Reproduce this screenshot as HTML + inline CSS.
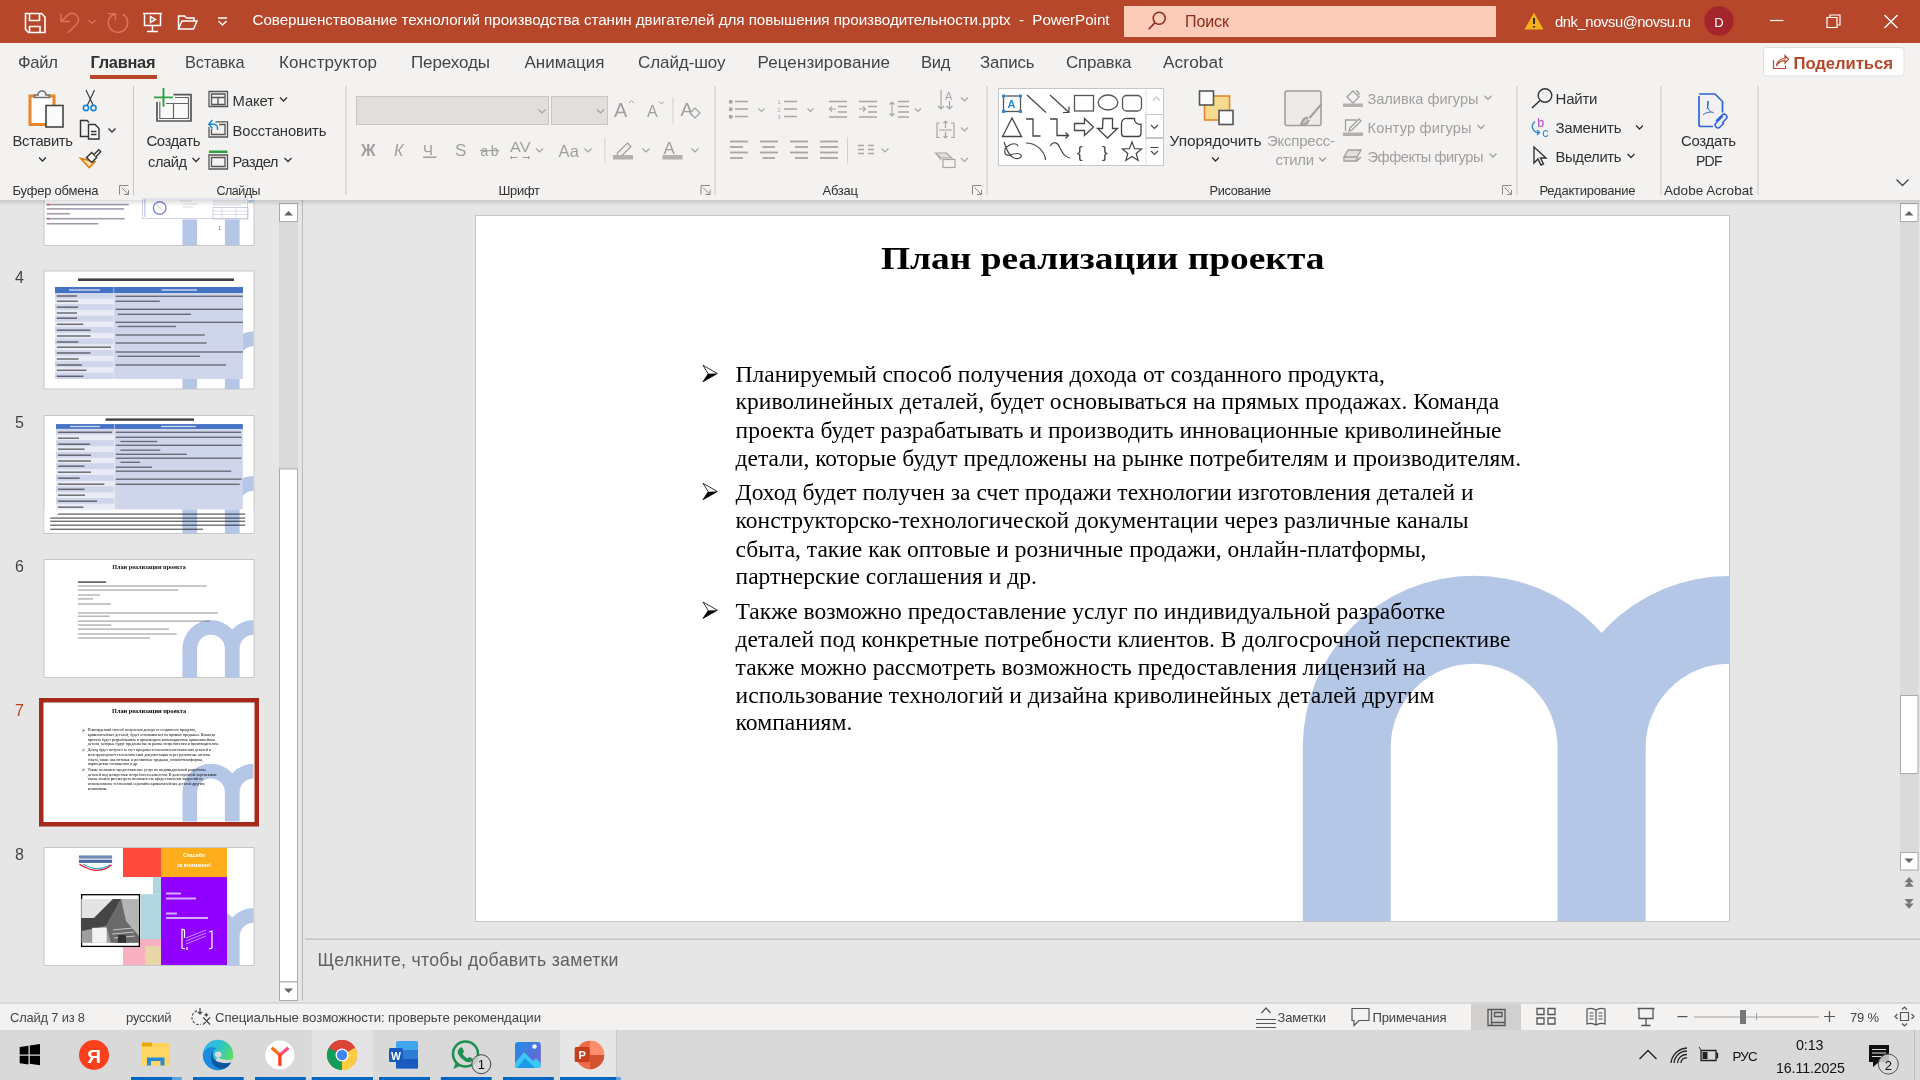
<!DOCTYPE html>
<html><head><meta charset="utf-8"><title>PowerPoint</title>
<style>
html,body{margin:0;padding:0;width:1920px;height:1080px;overflow:hidden;background:#E6E6E6}
svg{display:block;will-change:transform;font-family:"Liberation Sans",sans-serif}
text{white-space:pre}
</style></head><body>
<svg width="1920" height="1080" viewBox="0 0 1920 1080">
<rect x="0" y="43" width="1920" height="157" fill="#F3F2F1"/>
<rect x="0" y="0" width="1920" height="43" fill="#B7472A"/>
<rect x="0" y="200" width="1920" height="803" fill="#E6E6E6"/>
<rect x="0" y="1003" width="1920" height="27" fill="#F3F2F1"/>
<rect x="0" y="1030" width="1920" height="50" fill="#D9D9D9"/>
<path d="M25.5 13.5h16l3.5 3.5v15.5h-16.5l-3-3z M29.5 13.5v7h10v-7 M29.5 32.5v-6h10.5v6" stroke="#FFFFFF" fill="none" stroke-width="1.6"/>
<path d="M61 13.5V21.5H69.8 M61.8 20.8L67.5 15.2A6.3 6.3 0 0 1 76.6 24.3L68 32.8" stroke="#E8705A" fill="none" stroke-width="1.4"/>
<path d="M88.5 20l3.5 3.5l3.5-3.5" stroke="#E8705A" fill="none" stroke-width="1.1"/>
<path d="M107.9 13.6H115.4V20.5 M115.2 13.8L111 15.9A9.7 9.7 0 1 0 122.8 14.2" stroke="#E8705A" fill="none" stroke-width="1.4"/>
<path d="M143 13.5h19 M144.5 13.5v12h16v-12 M152.5 25.5v6 M147 31.5h11 M150.5 16.5v6l5-3z" stroke="#FFFFFF" fill="none" stroke-width="1.5"/>
<path d="M178.5 29v-13h6l2 2h7.5v3 M178.5 29l3.5-8h15l-3.5 8z" stroke="#FFFFFF" fill="none" stroke-width="1.5"/>
<path d="M218 18h9 M218.5 21l4 4l4-4" stroke="#FFFFFF" fill="none" stroke-width="1.4"/>
<text x="252.5" y="25" font-size="15.2" fill="#FFFFFF" textLength="857" lengthAdjust="spacing">Совершенствование технологий производства станин двигателей для повышения производительности.pptx  -  PowerPoint</text>
<rect x="1124" y="6" width="372" height="31" fill="#FCCCB9"/>
<circle cx="1159.2" cy="18.3" r="6" fill="none" stroke="#8B2B1A" stroke-width="1.5"/>
<path d="M1155 22.6l-6.3 6.6" stroke="#8B2B1A" fill="none" stroke-width="1.6"/>
<text x="1185" y="27" font-size="16" fill="#8B2B1A" textLength="44" lengthAdjust="spacing">Поиск</text>
<path d="M1534 12.5l9.5 17h-19z" stroke="none" fill="#F2B01E" stroke-width="1"/>
<path d="M1534 18v6 M1534 26v1.5" stroke="#222" fill="none" stroke-width="1.8"/>
<text x="1555" y="27.3" font-size="14.8" fill="#FFFFFF" textLength="136" lengthAdjust="spacing">dnk_novsu@novsu.ru</text>
<circle cx="1719" cy="21" r="14.7" fill="#A4262C"/>
<text x="1719" y="26.5" font-size="13" fill="#FFFFFF" text-anchor="middle">D</text>
<path d="M1770 20.5h13.5" stroke="#FFFFFF" fill="none" stroke-width="1.2"/>
<path d="M1827 17.5h10v10h-10z M1830 17.5v-2.5h10v10h-2.5" stroke="#FFFFFF" fill="none" stroke-width="1.2"/>
<path d="M1884.5 15l13 13 M1897.5 15l-13 13" stroke="#FFFFFF" fill="none" stroke-width="1.4"/>
<text x="18" y="68" font-size="16.6" fill="#444444" textLength="40" lengthAdjust="spacing">Файл</text>
<text x="90.5" y="68" font-size="16.4" fill="#323130" font-weight="700" textLength="65" lengthAdjust="spacing">Главная</text>
<rect x="90" y="75" width="67" height="4" fill="#B7472A"/>
<text x="185" y="68" font-size="16.4" fill="#444444" textLength="59.5" lengthAdjust="spacing">Вставка</text>
<text x="279" y="68" font-size="17" fill="#444444" textLength="98" lengthAdjust="spacing">Конструктор</text>
<text x="411" y="68" font-size="17" fill="#444444" textLength="79" lengthAdjust="spacing">Переходы</text>
<text x="524.5" y="68" font-size="17" fill="#444444" textLength="80" lengthAdjust="spacing">Анимация</text>
<text x="638" y="68" font-size="17" fill="#444444" textLength="87.5" lengthAdjust="spacing">Слайд-шоу</text>
<text x="757.5" y="68" font-size="17" fill="#444444" textLength="132.5" lengthAdjust="spacing">Рецензирование</text>
<text x="921" y="68" font-size="16.6" fill="#444444" textLength="29.5" lengthAdjust="spacing">Вид</text>
<text x="980" y="68" font-size="16.8" fill="#444444" textLength="54.5" lengthAdjust="spacing">Запись</text>
<text x="1066" y="68" font-size="17" fill="#444444" textLength="65.5" lengthAdjust="spacing">Справка</text>
<text x="1163" y="68" font-size="17.2" fill="#444444" textLength="60" lengthAdjust="spacing">Acrobat</text>
<rect x="1763.5" y="47.5" width="140.5" height="28.5" fill="#FFFFFF" stroke="#E1DFDD" rx="3"/>
<path d="M1773.5 60v8.5h12v-3 M1776.5 66c0.5-4 3.5-7.5 8.5-7.5v-3l3.5 3.8l-3.5 3.8v-2.8c-3.5 0-6.5 2-8.5 5.7z" stroke="#B7472A" fill="none" stroke-width="1.2"/>
<text x="1793.5" y="68.5" font-size="16.7" fill="#B7472A" font-weight="700" textLength="99.5" lengthAdjust="spacing">Поделиться</text>
<rect x="133" y="86" width="1" height="109" fill="#C8C6C4"/>
<rect x="345.5" y="86" width="1" height="109" fill="#C8C6C4"/>
<rect x="714.5" y="86" width="1" height="109" fill="#C8C6C4"/>
<rect x="986.5" y="86" width="1" height="109" fill="#C8C6C4"/>
<rect x="1516.5" y="86" width="1" height="109" fill="#C8C6C4"/>
<rect x="1660.5" y="86" width="1" height="109" fill="#C8C6C4"/>
<rect x="1757.5" y="86" width="1" height="109" fill="#C8C6C4"/>
<text x="12.5" y="195" font-size="13.0" fill="#323130" textLength="86" lengthAdjust="spacing">Буфер обмена</text>
<text x="216.5" y="195" font-size="12.5" fill="#323130" textLength="44" lengthAdjust="spacing">Слайды</text>
<text x="498.5" y="195" font-size="13.0" fill="#323130" textLength="41.5" lengthAdjust="spacing">Шрифт</text>
<text x="822.5" y="195" font-size="13.0" fill="#323130" textLength="35.5" lengthAdjust="spacing">Абзац</text>
<text x="1209.5" y="195" font-size="12.7" fill="#323130" textLength="61.5" lengthAdjust="spacing">Рисование</text>
<text x="1539.5" y="195" font-size="13.0" fill="#323130" textLength="96" lengthAdjust="spacing">Редактирование</text>
<text x="1664" y="195" font-size="13.5" fill="#323130" textLength="89" lengthAdjust="spacing">Adobe Acrobat</text>
<path d="M119.5 194.5v-9h9 M121.5 187.5l7 7 M124 194.5h4.5v-4.5" stroke="#8A8886" fill="none" stroke-width="1"/>
<path d="M701.0 194.5v-9h9 M703.0 187.5l7 7 M705.5 194.5h4.5v-4.5" stroke="#8A8886" fill="none" stroke-width="1"/>
<path d="M972.5 194.5v-9h9 M974.5 187.5l7 7 M977 194.5h4.5v-4.5" stroke="#8A8886" fill="none" stroke-width="1"/>
<path d="M1502.5 194.5v-9h9 M1504.5 187.5l7 7 M1507 194.5h4.5v-4.5" stroke="#8A8886" fill="none" stroke-width="1"/>
<text x="12.5" y="146" font-size="14.8" fill="#323130" textLength="60.5" lengthAdjust="spacing">Вставить</text>
<path d="M39 157.5l3.5 3.5l3.5-3.5" stroke="#323130" fill="none" stroke-width="1.3"/>
<rect x="30" y="96" width="24" height="28.5" fill="#FFFFFF" stroke="#E8862A" stroke-width="3"/>
<path d="M34.5 97.5h15v-2.5h-3.5a4 4 0 0 0 -8 0h-3.5z" stroke="#707070" fill="#F5F5F5" stroke-width="1.6"/>
<rect x="46" y="105.5" width="17" height="21.5" fill="#FAFAFA" stroke="#444" stroke-width="1.6"/>
<path d="M86 90l7.5 16 M94.5 90l-7.5 16" stroke="#333" fill="none" stroke-width="1.1"/>
<circle cx="86" cy="108" r="2.6" fill="none" stroke="#1E88D4" stroke-width="1.6"/><circle cx="93.5" cy="108" r="2.6" fill="none" stroke="#1E88D4" stroke-width="1.6"/>
<path d="M89 136.5h-8.5v-16h6.5l2 2" stroke="#333" fill="none" stroke-width="1.4"/>
<path d="M88.5 124.5h6.5l4 4v10.5h-10.5z M91 131.5h5.5 M91 134.5h5.5" stroke="#333" fill="#FAFAFA" stroke-width="1.4"/>
<path d="M108.5 128.5l3.5 3.5l3.5-3.5" stroke="#323130" fill="none" stroke-width="1.3"/>
<path d="M80.6 158.4L89.2 167.6L95 161.8z" stroke="#E07C13" fill="#FCE4A8" stroke-width="1.6"/>
<path d="M86.5 157.5L91.7 152.6L96.6 157.5L91.8 162.4z" stroke="#333" fill="#FAFAFA" stroke-width="1.4"/>
<path d="M94 154.5L98.8 149.7L100.8 151.7L96 156.5" stroke="#333" fill="#FAFAFA" stroke-width="1.4"/>
<text x="146.5" y="146" font-size="14.9" fill="#323130" textLength="54" lengthAdjust="spacing">Создать</text>
<text x="148" y="166.5" font-size="14.6" fill="#323130" textLength="39" lengthAdjust="spacing">слайд</text>
<path d="M192.5 158l3.5 3.5l3.5-3.5" stroke="#323130" fill="none" stroke-width="1.3"/>
<rect x="157.5" y="95" width="33.5" height="26" fill="#FAFAFA"/>
<path d="M157 100V121H191V94.7H173.5" stroke="#555" fill="none" stroke-width="1.7"/>
<path d="M159.8 100V118.5H188.5V97.5H175 M166 103.5H188.5 M173.5 103.5V118.5" stroke="#666" fill="none" stroke-width="1.2"/>
<rect x="154" y="93" width="12" height="9" fill="#F3F2F1"/>
<path d="M163.5 88V106.8 M154 97.4H173" stroke="#2EA043" fill="none" stroke-width="1.9"/>
<text x="232.5" y="106" font-size="14.8" fill="#323130" textLength="41.5" lengthAdjust="spacing">Макет</text>
<text x="232.5" y="136" font-size="14.8" fill="#323130" textLength="94" lengthAdjust="spacing">Восстановить</text>
<text x="232.5" y="166.5" font-size="14.8" fill="#323130" textLength="46" lengthAdjust="spacing">Раздел</text>
<path d="M280 97.5l3.5 3.5l3.5-3.5" stroke="#323130" fill="none" stroke-width="1.3"/>
<path d="M284.5 158l3.5 3.5l3.5-3.5" stroke="#323130" fill="none" stroke-width="1.3"/>
<path d="M209 91.5h18.5v15h-18.5z M211.5 94h13.5v10.5h-13.5z M211.5 97.5h13.5 M218 97.5v7" stroke="#555" fill="none" stroke-width="1.3"/>
<path d="M209 127V137H227.5V121.8H215.5 M211.5 129V134.5H225V124.5H219" stroke="#555" fill="none" stroke-width="1.3"/>
<path d="M212.5 120L208.8 124.2L212.5 128.4 M209 124.2H213.5A4 4 0 0 1 217.5 128.2V130" stroke="#1E88D4" fill="none" stroke-width="1.5"/>
<rect x="209" y="150.5" width="18.5" height="2.5" fill="#2EA043"/>
<path d="M209 155h18.5v14h-18.5z M211.5 157.5h13.5v9h-13.5z" stroke="#555" fill="none" stroke-width="1.3"/>
<rect x="356.5" y="96.5" width="192" height="28" fill="#E1DFDD" stroke="#C8C6C4"/>
<rect x="551.5" y="96.5" width="56" height="28" fill="#E1DFDD" stroke="#C8C6C4"/>
<path d="M538.5 109.5l3.5 3.5l3.5-3.5" stroke="#A19F9D" fill="none" stroke-width="1.1"/>
<path d="M597 109.5l3.5 3.5l3.5-3.5" stroke="#A19F9D" fill="none" stroke-width="1.1"/>
<text x="614" y="116.5" font-size="20" fill="#A19F9D">A</text>
<path d="M629 103l2.5-2.5l2.5 2.5" stroke="#A19F9D" fill="none" stroke-width="1"/>
<text x="647" y="116.5" font-size="16" fill="#A19F9D">A</text>
<path d="M659 101.5l2.5 2.5l2.5-2.5" stroke="#A19F9D" fill="none" stroke-width="1"/>
<rect x="672.5" y="97.5" width="1" height="26" fill="#D2D0CE"/>
<text x="680.5" y="116" font-size="19" fill="#A19F9D">A</text>
<path d="M690 113l5-5l5 5l-5 5z" stroke="#A19F9D" fill="#F3F2F1" stroke-width="1.2"/>
<text x="361" y="155.5" font-size="16" fill="#A19F9D" font-weight="700" textLength="18" lengthAdjust="spacing">Ж</text>
<text x="394" y="155.5" font-size="16" fill="#A19F9D" font-style="italic">К</text>
<text x="423" y="155" font-size="15" fill="#A19F9D">Ч</text>
<rect x="423" y="156.5" width="13.5" height="1.5" fill="#A19F9D"/>
<text x="455" y="155.5" font-size="17" fill="#A19F9D">S</text>
<text x="480.5" y="156" font-size="14" fill="#A19F9D" textLength="18" lengthAdjust="spacing">ab</text>
<rect x="480" y="150" width="19.5" height="1.2" fill="#A19F9D"/>
<text x="510" y="152" font-size="15" fill="#A19F9D" textLength="20.5" lengthAdjust="spacingAndGlyphs">AV</text>
<path d="M512 156l-1.5 1.5l1.5 1.5 M510.5 157.5h7 M528 156l1.5 1.5l-1.5 1.5 M529.5 157.5h-7" stroke="#A19F9D" fill="none" stroke-width="1"/>
<path d="M536 148.5l3.5 3.5l3.5-3.5" stroke="#A19F9D" fill="none" stroke-width="1.1"/>
<text x="558.5" y="156.5" font-size="16.5" fill="#A19F9D" textLength="20.5" lengthAdjust="spacing">Aa</text>
<path d="M584.5 148.5l3.5 3.5l3.5-3.5" stroke="#A19F9D" fill="none" stroke-width="1.1"/>
<rect x="604.5" y="137.5" width="1" height="25.5" fill="#D2D0CE"/>
<path d="M617.5 153l10-10l3.5 3.5l-10 10l-4.5 1z" stroke="#A19F9D" fill="none" stroke-width="1.2"/>
<rect x="613" y="155" width="20" height="4.5" fill="#B3B0AD"/>
<path d="M642.5 148.5l3.5 3.5l3.5-3.5" stroke="#A19F9D" fill="none" stroke-width="1.1"/>
<text x="663.5" y="154" font-size="17" fill="#A19F9D">A</text>
<rect x="662.5" y="155" width="20" height="4.5" fill="#B3B0AD"/>
<path d="M691.5 148.5l3.5 3.5l3.5-3.5" stroke="#A19F9D" fill="none" stroke-width="1.1"/>
<rect x="729" y="100.0" width="3.5" height="3.5" fill="#A8A6A4"/>
<rect x="729" y="107.5" width="3.5" height="3.5" fill="#A8A6A4"/>
<rect x="729" y="115.0" width="3.5" height="3.5" fill="#A8A6A4"/>
<rect x="735" y="100.75" width="13" height="1.5" fill="#A8A6A4"/>
<rect x="735" y="108.25" width="13" height="1.5" fill="#A8A6A4"/>
<rect x="735" y="115.75" width="13" height="1.5" fill="#A8A6A4"/>
<path d="M758.5 108.5l3 3l3-3" stroke="#A8A6A4" fill="none" stroke-width="1.1"/>
<text x="777.5" y="104" font-size="5.5" fill="#A8A6A4">1</text>
<text x="777.5" y="111.5" font-size="5.5" fill="#A8A6A4">2</text>
<text x="777.5" y="119" font-size="5.5" fill="#A8A6A4">3</text>
<rect x="784" y="100.75" width="13" height="1.5" fill="#A8A6A4"/>
<rect x="784" y="108.25" width="13" height="1.5" fill="#A8A6A4"/>
<rect x="784" y="115.75" width="13" height="1.5" fill="#A8A6A4"/>
<path d="M807.5 108.5l3 3l3-3" stroke="#A8A6A4" fill="none" stroke-width="1.1"/>
<rect x="829" y="100.75" width="18" height="1.5" fill="#A8A6A4"/>
<rect x="829" y="116.25" width="18" height="1.5" fill="#A8A6A4"/>
<rect x="838" y="105.75" width="9" height="1.5" fill="#A8A6A4"/>
<rect x="838" y="111.25" width="9" height="1.5" fill="#A8A6A4"/>
<path d="M836 109h-6.5 M832 106.5l-2.5 2.5l2.5 2.5" stroke="#A8A6A4" fill="none" stroke-width="1.1"/>
<rect x="859" y="100.75" width="18" height="1.5" fill="#A8A6A4"/>
<rect x="859" y="116.25" width="18" height="1.5" fill="#A8A6A4"/>
<rect x="868" y="105.75" width="9" height="1.5" fill="#A8A6A4"/>
<rect x="868" y="111.25" width="9" height="1.5" fill="#A8A6A4"/>
<path d="M859 109h6.5 M863 106.5l2.5 2.5l-2.5 2.5" stroke="#A8A6A4" fill="none" stroke-width="1.1"/>
<rect x="898" y="100.75" width="11" height="1.5" fill="#A8A6A4"/>
<rect x="898" y="105.75" width="11" height="1.5" fill="#A8A6A4"/>
<rect x="898" y="111.25" width="11" height="1.5" fill="#A8A6A4"/>
<rect x="898" y="116.25" width="11" height="1.5" fill="#A8A6A4"/>
<path d="M892 102v14 M889.5 104.5l2.5-2.5l2.5 2.5 M889.5 113.5l2.5 2.5l2.5-2.5" stroke="#A8A6A4" fill="none" stroke-width="1.1"/>
<path d="M915 108.5l3 3l3-3" stroke="#A8A6A4" fill="none" stroke-width="1.1"/>
<rect x="730" y="140.6" width="18" height="1.8" fill="#A8A6A4"/>
<rect x="730" y="151.6" width="18" height="1.8" fill="#A8A6A4"/>
<rect x="730" y="146.1" width="13" height="1.8" fill="#A8A6A4"/>
<rect x="730" y="157.1" width="13" height="1.8" fill="#A8A6A4"/>
<rect x="760" y="140.6" width="18" height="1.8" fill="#A8A6A4"/>
<rect x="760" y="151.6" width="18" height="1.8" fill="#A8A6A4"/>
<rect x="762.5" y="146.1" width="12.5" height="1.8" fill="#A8A6A4"/>
<rect x="762.5" y="157.1" width="12.5" height="1.8" fill="#A8A6A4"/>
<rect x="790" y="140.6" width="18" height="1.8" fill="#A8A6A4"/>
<rect x="790" y="151.6" width="18" height="1.8" fill="#A8A6A4"/>
<rect x="795" y="146.1" width="13" height="1.8" fill="#A8A6A4"/>
<rect x="795" y="157.1" width="13" height="1.8" fill="#A8A6A4"/>
<rect x="820" y="140.6" width="18" height="1.8" fill="#A8A6A4"/>
<rect x="820" y="146.1" width="18" height="1.8" fill="#A8A6A4"/>
<rect x="820" y="151.6" width="18" height="1.8" fill="#A8A6A4"/>
<rect x="820" y="157.1" width="18" height="1.8" fill="#A8A6A4"/>
<rect x="847" y="137" width="1" height="26.5" fill="#D2D0CE"/>
<rect x="858" y="144.75" width="6" height="1.5" fill="#A8A6A4"/>
<rect x="858" y="148.75" width="6" height="1.5" fill="#A8A6A4"/>
<rect x="858" y="152.75" width="6" height="1.5" fill="#A8A6A4"/>
<rect x="868" y="144.75" width="6" height="1.5" fill="#A8A6A4"/>
<rect x="868" y="148.75" width="6" height="1.5" fill="#A8A6A4"/>
<rect x="868" y="152.75" width="6" height="1.5" fill="#A8A6A4"/>
<path d="M881.5 148.5l3.5 3.5l3.5-3.5" stroke="#A8A6A4" fill="none" stroke-width="1.1"/>
<text x="945" y="100" font-size="11" fill="#A8A6A4">A</text>
<path d="M941 90v19 M938 106l3 3l3-3 M949.5 101v8.5 M946.5 106l3 3l3-3" stroke="#A8A6A4" fill="none" stroke-width="1.2"/>
<path d="M961 97.5l3.5 3.5l3.5-3.5" stroke="#A8A6A4" fill="none" stroke-width="1.1"/>
<path d="M940 123h-3v14.5h3 M951 123h3v14.5h-3 M939 130h13 M945.5 121v7 M943.5 123l2-2l2 2 M945.5 132v6 M943.5 136l2 2l2-2" stroke="#A8A6A4" fill="none" stroke-width="1.2"/>
<path d="M961 127.5l3.5 3.5l3.5-3.5" stroke="#A8A6A4" fill="none" stroke-width="1.1"/>
<path d="M935.5 153h11l5.5 5h-11z M935.5 153l5.5 7" stroke="#A8A6A4" fill="#E1DFDD" stroke-width="1.1"/>
<rect x="943" y="159.5" width="12" height="8" fill="#F3F2F1" stroke="#A8A6A4" stroke-width="1.2"/>
<path d="M961 158l3.5 3.5l3.5-3.5" stroke="#A8A6A4" fill="none" stroke-width="1.1"/>
<rect x="998.5" y="88.5" width="165" height="77" fill="#FFFFFF" stroke="#C8C6C4"/>
<rect x="1145.5" y="88.5" width="1" height="77" fill="#E1DFDD"/>
<rect x="1146" y="114.5" width="17.5" height="23" fill="#FFFFFF" stroke="#C8C6C4"/>
<rect x="1145.5" y="138" width="18" height="1" fill="#C8C6C4"/>
<path d="M1161 100.5l3.5-3.5l3.5 3.5" stroke="#C8C6C4" fill="none" stroke-width="1.1" transform="translate(-8,0)"/>
<path d="M1151 125l3.5 3.5l3.5-3.5" stroke="#444" fill="none" stroke-width="1.2"/>
<path d="M1150.5 147.5h8 M1151 151l3.5 3.5l3.5-3.5" stroke="#444" fill="none" stroke-width="1.2"/>
<rect x="1003.5" y="96" width="17" height="15.5" fill="none" stroke="#555" stroke-width="1.3"/>
<rect x="1002.0" y="94.5" width="3" height="3" fill="#2B88D8"/>
<rect x="1019.0" y="94.5" width="3" height="3" fill="#2B88D8"/>
<rect x="1002.0" y="110.0" width="3" height="3" fill="#2B88D8"/>
<rect x="1019.0" y="110.0" width="3" height="3" fill="#2B88D8"/>
<text x="1007.5" y="108" font-size="11" fill="#2B88D8" font-weight="700">A</text>
<path d="M1027 95l19 17.5" stroke="#444" fill="none" stroke-width="1.2"/>
<path d="M1050 95l19 17.5 M1063 112.5h6v-6" stroke="#444" fill="none" stroke-width="1.2"/>
<rect x="1074.5" y="95.5" width="19" height="15.5" fill="none" stroke="#555" stroke-width="1.3"/>
<ellipse cx="1108" cy="102.5" rx="9.8" ry="7.5" fill="none" stroke="#555" stroke-width="1.3"/>
<rect x="1122.5" y="95.5" width="19" height="15.5" fill="none" stroke="#555" stroke-width="1.3" rx="4"/>
<path d="M1012 118l-9.5 18.5h19z" stroke="#444" fill="none" stroke-width="1.3"/>
<path d="M1026 119h7v17h7.5" stroke="#444" fill="none" stroke-width="1.3"/>
<path d="M1050 119h7v16.5h11.5 M1065.5 132.5l3 3l-3 3" stroke="#444" fill="none" stroke-width="1.3"/>
<path d="M1074.5 123.5h10v-5l9 8.5l-9 8.5v-5h-10z" stroke="#444" fill="none" stroke-width="1.3"/>
<path d="M1103 118.5h9.5v10h5l-10 9.5l-10-9.5h5z" stroke="#444" fill="none" stroke-width="1.3"/>
<path d="M1127.5 118.5h7a5 5 0 0 0 6.5 5.5v9.5a3 3 0 0 1 -3 3h-13.5a3 3 0 0 1 -3-3v-10a5 5 0 0 1 6-5z" stroke="#444" fill="none" stroke-width="1.3"/>
<path d="M1004 142c2 4 3 13 10 16c5 2 8-1 7-3c-2-3-8-1-11 0c-6 2-7-6-2-9c4-3 9-3 10 0" stroke="#444" fill="none" stroke-width="1.2"/>
<path d="M1026 143c10 0 19 8 19.5 17" stroke="#444" fill="none" stroke-width="1.2"/>
<path d="M1050 146c4-6 8-3 10 2c3 6 5 9 10 10" stroke="#444" fill="none" stroke-width="1.2"/>
<text x="1077" y="158" font-size="17" fill="#444">{</text>
<text x="1102" y="158" font-size="17" fill="#444">}</text>
<path d="M1132 142l2.6 6.7l7 .3l-5.4 4.5l1.9 6.9l-6.1-4l-6.1 4l1.9-6.9l-5.4-4.5l7-.3z" stroke="#444" fill="none" stroke-width="1.2"/>
<rect x="1204.5" y="96" width="25" height="24" fill="#F8DA8E" stroke="#E8862A" stroke-width="1.6"/>
<rect x="1199.5" y="91" width="14" height="14" fill="#FAFAFA" stroke="#555" stroke-width="1.6"/>
<rect x="1219" y="110.5" width="14" height="14" fill="#FAFAFA" stroke="#555" stroke-width="1.6"/>
<text x="1169.5" y="146" font-size="15.5" fill="#323130" textLength="92" lengthAdjust="spacing">Упорядочить</text>
<path d="M1212 157.5l3.5 3.5l3.5-3.5" stroke="#323130" fill="none" stroke-width="1.3"/>
<rect x="1285" y="91" width="36" height="34.5" fill="#EDEBE9" stroke="#A19F9D" stroke-width="1.6" rx="2"/>
<path d="M1321.5 104l-12 14 M1308 118c-3-1-6 2-7 7c4 0 7-2 8-5" stroke="#A19F9D" fill="#C8C6C4" stroke-width="2"/>
<text x="1267" y="146" font-size="15.0" fill="#A19F9D" textLength="68" lengthAdjust="spacing">Экспресс-</text>
<text x="1275.5" y="165" font-size="14.9" fill="#A19F9D" textLength="38.5" lengthAdjust="spacing">стили</text>
<path d="M1319 157.5l3.5 3.5l3.5-3.5" stroke="#A19F9D" fill="none" stroke-width="1.3"/>
<text x="1367.5" y="103.8" font-size="14.6" fill="#A19F9D" textLength="111" lengthAdjust="spacing">Заливка фигуры</text>
<path d="M1484.5 95.8l3.5 3.5l3.5-3.5" stroke="#A19F9D" fill="none" stroke-width="1.3"/>
<text x="1367.5" y="133" font-size="14.6" fill="#A19F9D" textLength="104" lengthAdjust="spacing">Контур фигуры</text>
<path d="M1477.5 125l3.5 3.5l3.5-3.5" stroke="#A19F9D" fill="none" stroke-width="1.3"/>
<text x="1367.5" y="161.5" font-size="14.6" fill="#A19F9D" textLength="116" lengthAdjust="spacing">Эффекты фигуры</text>
<path d="M1489.5 153.5l3.5 3.5l3.5-3.5" stroke="#A19F9D" fill="none" stroke-width="1.3"/>
<path d="M1347 97l6-6l6 6l-6 6z M1356 91c2 0 3 2 3 4" stroke="#A19F9D" fill="none" stroke-width="1.3"/>
<rect x="1343" y="103.5" width="20" height="3.5" fill="#B3B0AD"/>
<path d="M1345.5 131v-11h11 M1350 128l9-9l2 2l-9 9l-3 1z" stroke="#A19F9D" fill="none" stroke-width="1.3"/>
<rect x="1343" y="132.5" width="20" height="3.5" fill="#B3B0AD"/>
<path d="M1344 157l4-7h13l-4 7z M1344 157v4h13l4-4 M1357 157v4" stroke="#A19F9D" fill="#E1DFDD" stroke-width="1.3"/>
<circle cx="1545" cy="95.5" r="6.8" fill="none" stroke="#333" stroke-width="1.4"/>
<path d="M1540 100.5l-8 7.5" stroke="#333" fill="none" stroke-width="1.6"/>
<text x="1555.5" y="104" font-size="15.0" fill="#323130" textLength="42" lengthAdjust="spacing">Найти</text>
<text x="1537.3" y="126.8" font-size="12.5" fill="#B146C2">b</text>
<text x="1542.3" y="136.8" font-size="12.5" fill="#2B88D8">c</text>
<path d="M1535 121.5c-4 3-4 10 4 11.5 M1537 130l2.5 2.5l-2.5 2.5" stroke="#2B88D8" fill="none" stroke-width="1.4"/>
<text x="1555.5" y="132.8" font-size="15.0" fill="#323130" textLength="66" lengthAdjust="spacing">Заменить</text>
<path d="M1636 125.5l3.5 3.5l3.5-3.5" stroke="#323130" fill="none" stroke-width="1.3"/>
<path d="M1534 147v16l4-4l3 6l2.5-1l-3-6h5.5z" stroke="#333" fill="none" stroke-width="1.4"/>
<text x="1555.5" y="162" font-size="14.8" fill="#323130" textLength="66" lengthAdjust="spacing">Выделить</text>
<path d="M1627.5 154l3.5 3.5l3.5-3.5" stroke="#323130" fill="none" stroke-width="1.3"/>
<path d="M1699 94h16l7.5 7.5v11 M1713 126.5h-12a2 2 0 0 1 -2-2v-28.5" stroke="#2D64D8" fill="none" stroke-width="1.7"/>
<path d="M1707 109c1-3 2-6 1-8c-1 3-1 8 3 11c-3 0-6 1-8 3 M1711 112c2 0 3 1 3 1" stroke="#2D64D8" fill="none" stroke-width="1"/>
<path d="M1716 121l6-6a2.8 2.8 0 0 1 4 4l-4 4 M1722 117l-6 6a2.8 2.8 0 0 0 4 4l4-4 M1719 120l4-4" stroke="#2D64D8" fill="none" stroke-width="1.6"/>
<text x="1681" y="146" font-size="14.9" fill="#323130" textLength="55" lengthAdjust="spacing">Создать</text>
<text x="1696" y="165.5" font-size="14.1" fill="#323130" textLength="26.5" lengthAdjust="spacing">PDF</text>
<path d="M1896.5 179.5l6 6l6-6" stroke="#444" fill="none" stroke-width="1.3"/>
<defs><linearGradient id="rsh" x1="0" y1="0" x2="0" y2="1"><stop offset="0" stop-color="#000" stop-opacity="0.13"/><stop offset="1" stop-color="#000" stop-opacity="0"/></linearGradient></defs>
<defs><clipPath id="slclip"><rect x="0" y="0" width="1253" height="705"/></clipPath>
<g id="mshape"><path d="M826.8 720V531.1A171.3 171.3 0 0 1 1169.4 531.1V720H1081.5V531.1A83.4 83.4 0 0 0 914.7 531.1V720z M1081.8 720V531.1A171.3 171.3 0 0 1 1424.3999999999999 531.1V720H1336.5V531.1A83.4 83.4 0 0 0 1169.6999999999998 531.1V720z" fill="#B4C7E7" clip-path="url(#slclip)"/></g>
<g id="s7"><rect x="0" y="0" width="1253" height="705" fill="#fff"/><use href="#mshape"/><text x="405" y="52.75" font-family="Liberation Serif" font-weight="700" font-size="31" fill="#000" textLength="443.5" lengthAdjust="spacingAndGlyphs">План реализации проекта</text><text x="259.6" y="165.7" font-family="Liberation Serif" font-size="23.4" fill="#000" textLength="649.2" lengthAdjust="spacingAndGlyphs">Планируемый способ получения дохода от созданного продукта,</text><text x="259.6" y="193.2" font-family="Liberation Serif" font-size="23.4" fill="#000" textLength="763.6" lengthAdjust="spacingAndGlyphs">криволинейных деталей, будет основываться на прямых продажах. Команда</text><text x="259.6" y="221.5" font-family="Liberation Serif" font-size="23.4" fill="#000" textLength="765.8" lengthAdjust="spacingAndGlyphs">проекта будет разрабатывать и производить инновационные криволинейные</text><text x="259.6" y="249.8" font-family="Liberation Serif" font-size="23.4" fill="#000" textLength="785.5" lengthAdjust="spacingAndGlyphs">детали, которые будут предложены на рынке потребителям и производителям.</text><text x="259.6" y="284.0" font-family="Liberation Serif" font-size="23.4" fill="#000" textLength="738.0" lengthAdjust="spacingAndGlyphs">Доход будет получен за счет продажи технологии изготовления деталей и</text><text x="259.6" y="312.1" font-family="Liberation Serif" font-size="23.4" fill="#000" textLength="733.0" lengthAdjust="spacingAndGlyphs">конструкторско-технологической документации через различные каналы</text><text x="259.6" y="340.7" font-family="Liberation Serif" font-size="23.4" fill="#000" textLength="690.8" lengthAdjust="spacingAndGlyphs">сбыта, такие как оптовые и розничные продажи, онлайн-платформы,</text><text x="259.6" y="368.4" font-family="Liberation Serif" font-size="23.4" fill="#000" textLength="301.2" lengthAdjust="spacingAndGlyphs">партнерские соглашения и др.</text><text x="259.6" y="402.6" font-family="Liberation Serif" font-size="23.4" fill="#000" textLength="709.6" lengthAdjust="spacingAndGlyphs">Также возможно предоставление услуг по индивидуальной разработке</text><text x="259.6" y="431.0" font-family="Liberation Serif" font-size="23.4" fill="#000" textLength="774.9" lengthAdjust="spacingAndGlyphs">деталей под конкретные потребности клиентов. В долгосрочной перспективе</text><text x="259.6" y="458.9" font-family="Liberation Serif" font-size="23.4" fill="#000" textLength="690.2" lengthAdjust="spacingAndGlyphs">также можно рассмотреть возможность предоставления лицензий на</text><text x="259.6" y="487.0" font-family="Liberation Serif" font-size="23.4" fill="#000" textLength="698.9" lengthAdjust="spacingAndGlyphs">использование технологий и дизайна криволинейных деталей другим</text><text x="259.6" y="514.4" font-family="Liberation Serif" font-size="23.4" fill="#000" textLength="116.7" lengthAdjust="spacingAndGlyphs">компаниям.</text><path d="M227 149.3L241.4 157.5L227 165.70000000000002L232.2 157.70000000000002z" fill="#fff" stroke="#000" stroke-width="0.8"/><path d="M232.2 157.70000000000002L241.4 157.5L227 165.70000000000002z" fill="#000"/><path d="M227 267.3L241.4 275.5L227 283.7L232.2 275.7z" fill="#fff" stroke="#000" stroke-width="0.8"/><path d="M232.2 275.7L241.4 275.5L227 283.7z" fill="#000"/><path d="M227 386.0L241.4 394.2L227 402.4L232.2 394.4z" fill="#fff" stroke="#000" stroke-width="0.8"/><path d="M232.2 394.4L241.4 394.2L227 402.4z" fill="#000"/></g>
</defs>
<rect x="475" y="215" width="1255" height="707" fill="#C6C6C6"/>
<use href="#s7" transform="translate(476,216)"/>
<rect x="1900" y="203" width="18.5" height="707" fill="#DADADA"/>
<rect x="1900.5" y="203.5" width="17.5" height="18" fill="#FFFFFF" stroke="#ABABAB"/>
<path d="M1904.5 215.5l4.5-4.5l4.5 4.5z" stroke="none" fill="#666" stroke-width="1"/>
<rect x="1900.5" y="695.5" width="17.5" height="78" fill="#FFFFFF" stroke="#ABABAB"/>
<rect x="1900.5" y="852.5" width="17.5" height="17.5" fill="#FFFFFF" stroke="#ABABAB"/>
<path d="M1904.5 858.5l4.5 4.5l4.5-4.5z" stroke="none" fill="#666" stroke-width="1"/>
<rect x="1900" y="871" width="18.5" height="42" fill="#E6E6E6"/>
<path d="M1904.5 882.2l4.6-5.2l4.6 5.2z M1904.5 886.8l4.6-5.2l4.6 5.2z" stroke="none" fill="#777" stroke-width="1"/>
<path d="M1904.5 899l4.6 5.2l4.6-5.2z M1904.5 903.6l4.6 5.2l4.6-5.2z" stroke="none" fill="#777" stroke-width="1"/>
<rect x="305" y="938.5" width="1615" height="1.2" fill="#BDBBB9"/>
<text x="317.5" y="965.5" font-size="17.7" fill="#616161" textLength="301" lengthAdjust="spacing">Щелкните, чтобы добавить заметки</text>
<rect x="279" y="203" width="19" height="797" fill="#DADADA"/>
<rect x="302" y="200" width="1" height="800.5" fill="#BDBBB9"/>
<rect x="279.5" y="203.5" width="18" height="18" fill="#FFFFFF" stroke="#ABABAB"/>
<path d="M284 215.5l4.5-4.5l4.5 4.5z" stroke="none" fill="#666" stroke-width="1"/>
<rect x="279.5" y="469" width="18" height="513" fill="#FFFFFF" stroke="#ABABAB"/>
<rect x="279.5" y="982" width="18" height="18.5" fill="#FFFFFF" stroke="#ABABAB"/>
<path d="M284 988.5l4.5 4.5l4.5-4.5z" stroke="none" fill="#666" stroke-width="1"/>
<rect x="43.5" y="200" width="211" height="46" fill="#C6C6C6"/>
<rect x="44.5" y="200" width="209" height="45" fill="#FFFFFF"/>
<clipPath id="t3clip"><rect x="44.5" y="200" width="209" height="45.3"/></clipPath>
<g clip-path="url(#t3clip)"><g transform="translate(44.5,127.8) scale(0.16679968076616122)"><use href="#mshape"/></g></g>
<rect x="141.5" y="200" width="107" height="19.5" fill="#FFFFFF"/>
<rect x="142.5" y="199" width="105" height="19.5" fill="none" stroke="#C5C8E8" stroke-width="0.8"/>
<rect x="144.5" y="199" width="0.8" height="18" fill="#9FA4DA"/>
<circle cx="159.7" cy="208" r="6.3" fill="none" stroke="#7F86D6" stroke-width="1.4"/>
<path d="M155 203l10 10" stroke="#C9B8B8" fill="none" stroke-width="0.6"/>
<rect x="213" y="207.5" width="35" height="11.5" fill="none" stroke="#B9BCD6" stroke-width="0.7"/>
<path d="M213 211h35 M213 214.5h35 M222 207.5v11.5 M236 207.5v11.5" stroke="#C8CADC" fill="none" stroke-width="0.6"/>
<path d="M213 201h33 M213 203h33 M213 205h28" stroke="#D0D0D8" fill="none" stroke-width="0.7"/>
<path d="M180 201h12 M183 204h14 M183 207h10" stroke="#C8C8D0" fill="none" stroke-width="0.7"/>
<rect x="46.6" y="203.8" width="82.2" height="1.6" fill="#5A4A6A" opacity="0.55"/>
<rect x="46.6" y="208.1" width="77.6" height="1.6" fill="#5A4A6A" opacity="0.55"/>
<rect x="46.6" y="212.95" width="23.2" height="1.6" fill="#5A4A6A" opacity="0.55"/>
<rect x="46.6" y="217.9" width="78.2" height="1.6" fill="#5A4A6A" opacity="0.55"/>
<rect x="46.6" y="222.9" width="51.8" height="1.6" fill="#5A4A6A" opacity="0.55"/>
<rect x="46.6" y="203.8" width="3" height="1.6" fill="#D04030" opacity="0.6"/>
<rect x="46.6" y="217.9" width="3" height="1.6" fill="#D04030" opacity="0.6"/>
<text x="218.5" y="229.5" font-size="4.5" fill="#555">1</text>
<text x="15" y="283" font-size="16" fill="#444">4</text>
<rect x="43.5" y="270.5" width="211" height="119" fill="#C6C6C6"/>
<rect x="44.5" y="271.5" width="209" height="117" fill="#FFFFFF"/>
<g transform="translate(44.5,271.5) scale(0.16679968076616122)"><use href="#mshape"/></g>
<rect x="55" y="287" width="188" height="92" fill="#CFD5EA"/>
<rect x="55" y="287" width="188" height="6" fill="#4472C4"/>
<rect x="55" y="293.0" width="58.5" height="5.7" fill="#CFD5EA"/>
<rect x="55" y="298.7" width="58.5" height="5.7" fill="#E9EBF5"/>
<rect x="55" y="304.4" width="58.5" height="5.7" fill="#CFD5EA"/>
<rect x="55" y="310.1" width="58.5" height="5.7" fill="#E9EBF5"/>
<rect x="55" y="315.8" width="58.5" height="5.7" fill="#CFD5EA"/>
<rect x="55" y="321.5" width="58.5" height="5.7" fill="#E9EBF5"/>
<rect x="55" y="327.2" width="58.5" height="5.7" fill="#CFD5EA"/>
<rect x="55" y="332.9" width="58.5" height="5.7" fill="#E9EBF5"/>
<rect x="55" y="338.6" width="58.5" height="5.7" fill="#CFD5EA"/>
<rect x="55" y="344.3" width="58.5" height="5.7" fill="#E9EBF5"/>
<rect x="55" y="350.0" width="58.5" height="5.7" fill="#CFD5EA"/>
<rect x="55" y="355.7" width="58.5" height="5.7" fill="#E9EBF5"/>
<rect x="55" y="361.4" width="58.5" height="5.7" fill="#CFD5EA"/>
<rect x="55" y="367.1" width="58.5" height="5.7" fill="#E9EBF5"/>
<rect x="55" y="372.8" width="58.5" height="5.7" fill="#CFD5EA"/>
<rect x="113.5" y="287" width="0.7" height="92" fill="#FFFFFF" opacity="0.7"/>
<rect x="78" y="278.4" width="156" height="2.6" fill="#111" opacity="0.8"/>
<rect x="69" y="289.3" width="31" height="1.4" fill="#FFFFFF" opacity="0.75"/>
<rect x="161.5" y="289.3" width="35.5" height="1.4" fill="#FFFFFF" opacity="0.75"/>
<rect x="56.8" y="295.25" width="20.2" height="1.5" fill="#1A1A1A" opacity="0.6"/>
<rect x="56.8" y="300.45" width="21.2" height="1.5" fill="#1A1A1A" opacity="0.6"/>
<rect x="56.8" y="306.45" width="21.2" height="1.5" fill="#1A1A1A" opacity="0.6"/>
<rect x="56.8" y="312.25" width="20.2" height="1.5" fill="#1A1A1A" opacity="0.6"/>
<rect x="56.8" y="317.45" width="20.2" height="1.5" fill="#1A1A1A" opacity="0.6"/>
<rect x="56.8" y="323.55" width="26.5" height="1.5" fill="#1A1A1A" opacity="0.6"/>
<rect x="56.8" y="329.45" width="33.7" height="1.5" fill="#1A1A1A" opacity="0.6"/>
<rect x="56.8" y="335.25" width="33.7" height="1.5" fill="#1A1A1A" opacity="0.6"/>
<rect x="56.8" y="341.25" width="21.7" height="1.5" fill="#1A1A1A" opacity="0.6"/>
<rect x="56.8" y="346.45" width="54.2" height="1.5" fill="#1A1A1A" opacity="0.6"/>
<rect x="56.8" y="352.25" width="33.7" height="1.5" fill="#1A1A1A" opacity="0.6"/>
<rect x="56.8" y="358.25" width="21.7" height="1.5" fill="#1A1A1A" opacity="0.6"/>
<rect x="56.8" y="364.25" width="25.2" height="1.5" fill="#1A1A1A" opacity="0.6"/>
<rect x="56.8" y="369.55" width="29.5" height="1.5" fill="#1A1A1A" opacity="0.6"/>
<rect x="56.8" y="375.55" width="26.5" height="1.5" fill="#1A1A1A" opacity="0.6"/>
<rect x="115.6" y="295.6" width="127.2" height="1.4" fill="#1A1A1A" opacity="0.55"/>
<rect x="115.6" y="300.6" width="44.1" height="1.4" fill="#1A1A1A" opacity="0.55"/>
<rect x="115.6" y="308.6" width="127.2" height="1.4" fill="#1A1A1A" opacity="0.55"/>
<rect x="117.8" y="313.6" width="73.2" height="1.4" fill="#1A1A1A" opacity="0.55"/>
<rect x="115.6" y="321.6" width="127.2" height="1.4" fill="#1A1A1A" opacity="0.55"/>
<rect x="117.8" y="325.8" width="58.2" height="1.4" fill="#1A1A1A" opacity="0.55"/>
<rect x="115.6" y="334.3" width="89.3" height="1.4" fill="#1A1A1A" opacity="0.55"/>
<rect x="115.6" y="342.3" width="91.1" height="1.4" fill="#1A1A1A" opacity="0.55"/>
<rect x="115.6" y="351.3" width="127.2" height="1.4" fill="#1A1A1A" opacity="0.55"/>
<rect x="117.8" y="355.6" width="82.2" height="1.4" fill="#1A1A1A" opacity="0.55"/>
<rect x="115.6" y="364.3" width="110.4" height="1.4" fill="#1A1A1A" opacity="0.55"/>
<text x="15" y="427.5" font-size="16" fill="#444">5</text>
<rect x="43.5" y="415.0" width="211" height="119" fill="#C6C6C6"/>
<rect x="44.5" y="416.0" width="209" height="117" fill="#FFFFFF"/>
<g transform="translate(44.5,416) scale(0.16679968076616122)"><use href="#mshape"/></g>
<rect x="56" y="424.1" width="186.8" height="85.5" fill="#CFD5EA"/>
<rect x="56" y="424.1" width="186.8" height="4.8" fill="#4472C4"/>
<rect x="56" y="428.9" width="58.2" height="5.76" fill="#CFD5EA"/>
<rect x="56" y="434.65999999999997" width="58.2" height="5.76" fill="#E9EBF5"/>
<rect x="56" y="440.41999999999996" width="58.2" height="5.76" fill="#CFD5EA"/>
<rect x="56" y="446.17999999999995" width="58.2" height="5.76" fill="#E9EBF5"/>
<rect x="56" y="451.94" width="58.2" height="5.76" fill="#CFD5EA"/>
<rect x="56" y="457.7" width="58.2" height="5.76" fill="#E9EBF5"/>
<rect x="56" y="463.46" width="58.2" height="5.76" fill="#CFD5EA"/>
<rect x="56" y="469.21999999999997" width="58.2" height="5.76" fill="#E9EBF5"/>
<rect x="56" y="474.97999999999996" width="58.2" height="5.76" fill="#CFD5EA"/>
<rect x="56" y="480.73999999999995" width="58.2" height="5.76" fill="#E9EBF5"/>
<rect x="56" y="486.5" width="58.2" height="5.76" fill="#CFD5EA"/>
<rect x="56" y="492.26" width="58.2" height="5.76" fill="#E9EBF5"/>
<rect x="56" y="498.02" width="58.2" height="5.76" fill="#CFD5EA"/>
<rect x="56" y="503.78" width="58.2" height="5.76" fill="#E9EBF5"/>
<rect x="114.2" y="424.1" width="0.7" height="85.5" fill="#FFFFFF" opacity="0.7"/>
<rect x="44.5" y="509.6" width="209" height="23" fill="#FFFFFF"/>
<clipPath id="t5clip"><rect x="44.5" y="509.6" width="209" height="24"/></clipPath>
<g clip-path="url(#t5clip)"><g transform="translate(44.5,416) scale(0.16679968076616122)"><use href="#mshape"/></g></g>
<rect x="105.6" y="418.4" width="88.4" height="2.4" fill="#111" opacity="0.8"/>
<rect x="70" y="425.85" width="30" height="1.3" fill="#FFFFFF" opacity="0.75"/>
<rect x="161" y="425.85" width="35" height="1.3" fill="#FFFFFF" opacity="0.75"/>
<rect x="57.9" y="431.55" width="54.1" height="1.5" fill="#1A1A1A" opacity="0.6"/>
<rect x="57.9" y="437.45" width="21.1" height="1.5" fill="#1A1A1A" opacity="0.6"/>
<rect x="57.9" y="443.45" width="32.1" height="1.5" fill="#1A1A1A" opacity="0.6"/>
<rect x="57.9" y="448.45" width="26.6" height="1.5" fill="#1A1A1A" opacity="0.6"/>
<rect x="57.9" y="454.45" width="33.1" height="1.5" fill="#1A1A1A" opacity="0.6"/>
<rect x="57.9" y="460.25" width="33.1" height="1.5" fill="#1A1A1A" opacity="0.6"/>
<rect x="57.9" y="465.45" width="26.6" height="1.5" fill="#1A1A1A" opacity="0.6"/>
<rect x="57.9" y="471.45" width="33.1" height="1.5" fill="#1A1A1A" opacity="0.6"/>
<rect x="57.9" y="477.45" width="21.8" height="1.5" fill="#1A1A1A" opacity="0.6"/>
<rect x="57.9" y="483.45" width="46.5" height="1.5" fill="#1A1A1A" opacity="0.6"/>
<rect x="57.9" y="488.55" width="26.6" height="1.5" fill="#1A1A1A" opacity="0.6"/>
<rect x="57.9" y="494.45" width="27.1" height="1.5" fill="#1A1A1A" opacity="0.6"/>
<rect x="57.9" y="500.45" width="39.1" height="1.5" fill="#1A1A1A" opacity="0.6"/>
<rect x="57.9" y="506.45" width="25.4" height="1.5" fill="#1A1A1A" opacity="0.6"/>
<rect x="115.8" y="431.6" width="125.2" height="1.4" fill="#1A1A1A" opacity="0.55"/>
<rect x="115.8" y="436.6" width="125.8" height="1.4" fill="#1A1A1A" opacity="0.55"/>
<rect x="120.4" y="440.8" width="36.9" height="1.4" fill="#1A1A1A" opacity="0.55"/>
<rect x="115.8" y="444.6" width="125.8" height="1.4" fill="#1A1A1A" opacity="0.55"/>
<rect x="120.4" y="449.5" width="39.9" height="1.4" fill="#1A1A1A" opacity="0.55"/>
<rect x="115.8" y="453.6" width="71.0" height="1.4" fill="#1A1A1A" opacity="0.55"/>
<rect x="115.8" y="457.5" width="125.8" height="1.4" fill="#1A1A1A" opacity="0.55"/>
<rect x="120.4" y="461.6" width="19.6" height="1.4" fill="#1A1A1A" opacity="0.55"/>
<rect x="115.8" y="466.5" width="36.2" height="1.4" fill="#1A1A1A" opacity="0.55"/>
<rect x="115.8" y="470.5" width="115.5" height="1.4" fill="#1A1A1A" opacity="0.55"/>
<rect x="115.8" y="478.5" width="125.8" height="1.4" fill="#1A1A1A" opacity="0.55"/>
<rect x="115.8" y="483.6" width="124.0" height="1.4" fill="#1A1A1A" opacity="0.55"/>
<rect x="57.8" y="513.4" width="187.4" height="1.4" fill="#111" opacity="0.6"/>
<rect x="50.2" y="517.4" width="195.0" height="1.4" fill="#111" opacity="0.6"/>
<rect x="50.2" y="520.6" width="195.0" height="1.4" fill="#111" opacity="0.6"/>
<rect x="50.2" y="524.5" width="195.0" height="1.4" fill="#111" opacity="0.6"/>
<rect x="50.2" y="528.6" width="152.8" height="1.4" fill="#111" opacity="0.6"/>
<text x="15" y="572" font-size="16" fill="#444">6</text>
<rect x="43.5" y="559.0" width="211" height="119" fill="#C6C6C6"/>
<rect x="44.5" y="560.0" width="209" height="117" fill="#FFFFFF"/>
<g transform="translate(44.5,560) scale(0.16679968076616122)"><use href="#mshape"/></g>
<text x="112.2" y="569.2" font-size="5.6" fill="#111" font-weight="700" font-family="Liberation Serif" textLength="73.6" lengthAdjust="spacingAndGlyphs">План реализации проекта</text>
<rect x="77.9" y="581.35" width="28.3" height="1.5" fill="#111" opacity="0.75"/>
<rect x="77.9" y="585.35" width="128.8" height="1.3" fill="#555" opacity="0.5"/>
<rect x="77.9" y="589.45" width="100.5" height="1.3" fill="#555" opacity="0.5"/>
<rect x="77.9" y="594.35" width="21.9" height="1.3" fill="#555" opacity="0.5"/>
<rect x="77.9" y="598.25" width="15.1" height="1.3" fill="#555" opacity="0.5"/>
<rect x="77.9" y="603.35" width="33.1" height="1.3" fill="#555" opacity="0.5"/>
<rect x="77.9" y="612.35" width="140.0" height="1.3" fill="#555" opacity="0.5"/>
<rect x="77.9" y="615.55" width="31.7" height="1.3" fill="#555" opacity="0.5"/>
<rect x="77.9" y="620.45" width="131.8" height="1.3" fill="#555" opacity="0.5"/>
<rect x="77.9" y="624.35" width="33.3" height="1.3" fill="#555" opacity="0.5"/>
<rect x="77.9" y="628.45" width="91.1" height="1.3" fill="#555" opacity="0.5"/>
<rect x="77.9" y="633.35" width="98.7" height="1.3" fill="#555" opacity="0.5"/>
<rect x="77.9" y="637.35" width="72.2" height="1.3" fill="#555" opacity="0.5"/>
<text x="15" y="715.5" font-size="16" fill="#C43E1C">7</text>
<rect x="39" y="698" width="220" height="128.5" fill="#A5291B"/>
<rect x="43.5" y="702.5" width="211" height="119.5" fill="#FFFFFF"/>
<g transform="translate(44.5,703.8) scale(0.16679968076616122)"><use href="#s7"/></g>
<text x="15" y="860" font-size="16" fill="#444">8</text>
<rect x="43.5" y="847.0" width="211" height="119" fill="#C6C6C6"/>
<rect x="44.5" y="848.0" width="209" height="117" fill="#FFFFFF"/>
<g transform="translate(44.5,848) scale(0.16679968076616122)"><use href="#mshape"/></g>
<rect x="123" y="848" width="38" height="29" fill="#FF4A3D"/>
<rect x="161" y="848" width="66" height="29" fill="#FDAE1A"/>
<rect x="161" y="877" width="66" height="88" fill="#8F00FF"/>
<rect x="152.9" y="877" width="8.1" height="17.2" fill="#B2D6E0"/>
<rect x="140.5" y="894.2" width="20.5" height="45" fill="#B2D6E0"/>
<rect x="123" y="939" width="38" height="26" fill="#F9B1C2"/>
<rect x="145.3" y="946" width="15.7" height="19" fill="#E8D6A8"/>
<rect x="81.6" y="894.7" width="57.8" height="51.7" fill="#FFFFFF" stroke="#000" stroke-width="1.3"/>
<rect x="81.5" y="899" width="57.4" height="43.8" fill="#9E9E9E"/>
<path d="M81.5 899H113L94 918H81.5z" stroke="none" fill="#E4E4E4" stroke-width="1"/>
<path d="M122 899H139V936L124 921z" stroke="none" fill="#B5B5B5" stroke-width="1"/>
<path d="M81.5 918H94L113 899H121L106 926L81.5 931z" stroke="none" fill="#454545" stroke-width="1"/>
<path d="M106 926L121 899L126 921L139 936V942.8H111z" stroke="none" fill="#6A6A6A" stroke-width="1"/>
<path d="M113 930l20-2M112 934l22-2M114 938l21-2" stroke="#DDD" fill="none" stroke-width="0.8"/>
<rect x="92.2" y="927.8" width="14.5" height="15" fill="#F2F2F2"/>
<rect x="118" y="935" width="8" height="7.8" fill="#333"/>
<text x="194" y="857" font-size="5.2" fill="#FFF" font-weight="700" text-anchor="middle">Спасибо</text>
<text x="194" y="866.5" font-size="5.2" fill="#FFF" font-weight="700" text-anchor="middle">за внимание!</text>
<rect x="166" y="892.5" width="15" height="2" fill="#E8D8FF" opacity="0.8"/>
<rect x="166" y="897.5" width="30" height="2" fill="#E8D8FF" opacity="0.8"/>
<rect x="166" y="912.5" width="11" height="2" fill="#E8D8FF" opacity="0.8"/>
<rect x="166" y="917" width="42" height="2" fill="#E8D8FF" opacity="0.8"/>
<path d="M184.5 938v-8l-3-1 M187 950v-3 M182 929v19l3 1 M209 932l3-1v17l-3 1" stroke="#FFF" fill="none" stroke-width="1.2"/>
<path d="M186 944l20-8 M186 941l20-8 M186 938l20-8" stroke="#D8B0FF" fill="none" stroke-width="0.8"/>
<rect x="78.9" y="855.4" width="33.2" height="3.2" fill="#3F629B" opacity="0.75"/>
<rect x="78.9" y="859.7" width="33.2" height="3.2" fill="#2A4F8C" opacity="0.85"/>
<path d="M79.5 864.3C85 868 91 870.3 97 870.3C103 870.3 108 868 111.5 864.8" stroke="#E4141B" fill="none" stroke-width="1.3"/>
<path d="M83 864.2C88 867 93 868.6 97.5 868.6C102 868.6 106 867 110 865" stroke="#2CA8E6" fill="none" stroke-width="1.1"/>
<rect x="0" y="1002.5" width="1920" height="1" fill="#C8C6C4"/>
<text x="10" y="1021.8" font-size="12.9" fill="#444444" textLength="75" lengthAdjust="spacing">Слайд 7 из 8</text>
<text x="126" y="1021.8" font-size="13.0" fill="#444444" textLength="45.5" lengthAdjust="spacing">русский</text>
<path d="M197 1010.8A7 7 0 0 0 201 1024.3" stroke="#555" fill="none" stroke-width="1.2" stroke-dasharray="2.6 1.6"/>
<path d="M200 1008V1014 M197.8 1011.8L200 1014L202.2 1011.8 M203.2 1017.5L210 1024.5 M210 1017.5L203.2 1024.5" stroke="#444" fill="none" stroke-width="1.2"/>
<path d="M206.3 1012.5l0.8 1.6l1.6 0.8l-1.6 0.8l-0.8 1.6l-0.8-1.6l-1.6-0.8l1.6-0.8z" stroke="none" fill="#444" stroke-width="1"/>
<text x="215" y="1021.8" font-size="13.2" fill="#444444" textLength="326" lengthAdjust="spacing">Специальные возможности: проверьте рекомендации</text>
<path d="M1256 1027.5h20 M1256 1023.5h20 M1256 1019.5h20 M1261.5 1013l4.5-5l4.5 5" stroke="#555" fill="none" stroke-width="1.2"/>
<text x="1277.5" y="1021.8" font-size="13.0" fill="#444444" textLength="48.5" lengthAdjust="spacing">Заметки</text>
<path d="M1352 1008.5h17v12h-10l-5 5v-5h-2z" stroke="#555" fill="none" stroke-width="1.2"/>
<text x="1372.5" y="1021.8" font-size="13.1" fill="#444444" textLength="74" lengthAdjust="spacing">Примечания</text>
<rect x="1471" y="1003.5" width="50" height="26.5" fill="#D2D0CE"/>
<path d="M1488 1009.5h17v16h-17z M1491.5 1009.5v16 M1494.5 1012.5h7.5v4h-7.5z M1491.5 1022.5h13.5" stroke="#555" fill="none" stroke-width="1.3"/>
<path d="M1537 1008.5h7v6h-7z M1548 1008.5h7v6h-7z M1537 1018h7v6h-7z M1548 1018h7v6h-7z" stroke="#555" fill="none" stroke-width="1.3"/>
<path d="M1587 1009c3-1 6-1 9 1c3-2 6-2 9-1v15c-3-1-6-1-9 1c-3-2-6-2-9-1z M1596 1010v15 M1589.5 1013h4 M1589.5 1016h4 M1589.5 1019h4 M1598.5 1013h4 M1598.5 1016h4 M1598.5 1019h4" stroke="#555" fill="none" stroke-width="1.2"/>
<path d="M1637.5 1008.5h17 M1639 1008.5v10h14v-10 M1646 1018.5v7 M1641.5 1025.5h9" stroke="#555" fill="none" stroke-width="1.3"/>
<rect x="1677.5" y="1016" width="10" height="1.2" fill="#555"/>
<rect x="1694" y="1016.5" width="125" height="1" fill="#A19F9D"/>
<rect x="1740" y="1010" width="6" height="14" fill="#777"/>
<rect x="1756" y="1013" width="1" height="7" fill="#A19F9D"/>
<path d="M1824 1016.5h11 M1829.5 1011v11" stroke="#555" fill="none" stroke-width="1.2"/>
<text x="1850" y="1021.8" font-size="13.0" fill="#444444" textLength="29" lengthAdjust="spacing">79 %</text>
<path d="M1900.5 1012.5h8v8h-8z M1902 1009.5l2.5-2.5l2.5 2.5 M1902 1023.5l2.5 2.5l2.5-2.5 M1897.5 1014l-2.5 2.5l2.5 2.5 M1911.5 1014l2.5 2.5l-2.5 2.5" stroke="#555" fill="none" stroke-width="1.2"/>
<rect x="311.7" y="1030" width="61.3" height="50" fill="#E3E3E3"/>
<rect x="560" y="1030" width="56.5" height="50" fill="#E6E6E6"/>
<rect x="616.3" y="1030" width="0.8" height="50" fill="#C0C0C0"/>
<rect x="131" y="1077" width="41" height="3" fill="#0067C0"/>
<rect x="172" y="1077" width="9.699999999999989" height="3" fill="#5DA1E0"/>
<rect x="193" y="1077" width="50.69999999999999" height="3" fill="#0067C0"/>
<rect x="255" y="1077" width="50.80000000000001" height="3" fill="#0067C0"/>
<rect x="311.7" y="1077" width="61.30000000000001" height="3" fill="#0067C0"/>
<rect x="379" y="1077" width="51" height="3" fill="#0067C0"/>
<rect x="440.8" y="1077" width="50.89999999999998" height="3" fill="#0067C0"/>
<rect x="503" y="1077" width="50.799999999999955" height="3" fill="#0067C0"/>
<rect x="560" y="1077" width="56.5" height="3" fill="#0067C0"/>
<rect x="616.5" y="1077" width="4.2999999999999545" height="3" fill="#5DA1E0"/>
<path d="M19.7 1047l8.8-1.3v8.8h-8.8z M29.8 1045.5l10.2-1.5v10.5h-10.2z M19.7 1055.7h8.8v8.8l-8.8-1.2z M29.8 1055.7h10.2v9.5l-10.2-1.4z" stroke="none" fill="#000" stroke-width="1"/>
<circle cx="94" cy="1055" r="15" fill="#FC3F1D"/>
<text x="94" y="1063" font-size="19" fill="#FFF" font-weight="700" text-anchor="middle">Я</text>
<rect x="142" y="1043" width="27.5" height="22.5" fill="#FFD05A"/>
<rect x="142" y="1042.5" width="10" height="4" fill="#E8A600"/>
<rect x="142" y="1047" width="27.5" height="18.5" fill="#FFD764"/>
<path d="M147 1065.5v-8h17.5v8h-4v-4.5h-9.5v4.5z" stroke="none" fill="#2B88D8" stroke-width="1"/>
<defs><linearGradient id="edg" x1="0" y1="0.2" x2="1" y2="0.6"><stop offset="0" stop-color="#2FB6F0"/><stop offset="0.5" stop-color="#2DC3C8"/><stop offset="1" stop-color="#62DF58"/></linearGradient></defs>
<circle cx="218" cy="1055" r="15.2" fill="url(#edg)"/>
<path d="M217.5 1057.3C221.5 1060 227 1060.6 233.6 1059.6V1064C228 1065 220 1064 215.5 1060.5z" stroke="none" fill="#D9D9D9" stroke-width="1"/>
<path d="M202.8 1055A15.2 15.2 0 0 0 218 1070.2C224 1070.2 229 1066.5 231 1062.5C226 1064 219 1063 215.5 1060.5C211.5 1057.5 211.5 1050.5 216.5 1048.5C211.5 1045.5 205 1047.5 202.8 1055z" stroke="none" fill="#1A8BDD" stroke-width="1"/>
<path d="M213.5 1050.5C209 1056 210.5 1066.5 220 1068.8C225 1069.5 229 1066.5 231 1062.5C226 1064 219 1063 215.5 1060.5C212.5 1058 212 1054 213.5 1050.5z" stroke="none" fill="#0F56A3" stroke-width="1"/>
<ellipse cx="218.2" cy="1054.6" rx="3.4" ry="3.1" fill="#D9D9D9"/>
<circle cx="279.9" cy="1055" r="14.6" fill="#FFFFFF"/>
<defs><linearGradient id="ybr" x1="0" y1="0" x2="1" y2="1"><stop offset="0" stop-color="#FF5FD6"/><stop offset="1" stop-color="#FF3D1F"/></linearGradient></defs>
<path d="M271.7 1047.8L279.9 1055" stroke="#FF6A13" fill="none" stroke-width="3.3"/>
<path d="M288.4 1047.8L279.9 1055" stroke="url(#ybr)" fill="none" stroke-width="3.3"/>
<path d="M279.9 1054.5V1065.9" stroke="#FF3D1F" fill="none" stroke-width="3.3"/>
<circle cx="342" cy="1055" r="15" fill="#DB4437"/>
<path d="M342 1055L355 1062.5A15 15 0 0 1 342 1070z" stroke="none" fill="#FFCD40" stroke-width="1"/>
<path d="M342 1055L355 1062.5A15 15 0 0 0 355 1047.5z" stroke="none" fill="#FFCD40" stroke-width="1"/>
<path d="M342 1055L329 1062.5A15 15 0 0 0 342 1070z" stroke="none" fill="#0F9D58" stroke-width="1"/>
<path d="M342 1055L342 1070A15 15 0 0 0 355 1062.5z" stroke="none" fill="#FFCD40" stroke-width="1"/>
<path d="M342 1055L329 1062.5A15 15 0 0 1 329 1047.5z" stroke="none" fill="#0F9D58" stroke-width="1"/>
<path d="M342 1055L329 1047.5A15 15 0 0 1 355 1047.5z" stroke="none" fill="#DB4437" stroke-width="1"/>
<circle cx="342" cy="1055" r="6.5" fill="#FFFFFF"/><circle cx="342" cy="1055" r="5.2" fill="#4285F4"/>
<rect x="396" y="1041" width="22" height="27.5" fill="#41A5EE" rx="2"/>
<rect x="396" y="1050" width="22" height="9" fill="#2B7CD3"/>
<rect x="396" y="1059" width="22" height="9.5" fill="#185ABD"/>
<rect x="389" y="1048" width="14" height="14" fill="#185ABD" rx="1.5"/>
<text x="396" y="1059.5" font-size="10.5" fill="#FFF" font-weight="700" text-anchor="middle">W</text>
<circle cx="465.5" cy="1054" r="12.5" fill="none" stroke="#1E8F4E" stroke-width="2.6"/>
<path d="M453.5 1069l2.5-7.5l5 4z" stroke="none" fill="#1E8F4E" stroke-width="1"/>
<path d="M460 1048c1-1 2-1 3 1l1 3l-1.5 1.5c1 2 3 4 5 5l1.5-1.5l3 1c1 1 1 2 0 3c-3 3-8 0-11-3c-3-3-5-7-1-10z" stroke="none" fill="#1E8F4E" stroke-width="1"/>
<circle cx="481.3" cy="1064.2" r="9.5" fill="#D9D9D9" fill-opacity="0.8" stroke="#444" stroke-width="1"/>
<text x="481.3" y="1069" font-size="13" fill="#111" text-anchor="middle">1</text>
<defs><linearGradient id="pho" x1="0" y1="0" x2="1" y2="1"><stop offset="0" stop-color="#1F8EEA"/><stop offset="1" stop-color="#7A5BD0"/></linearGradient></defs>
<rect x="515" y="1042" width="25.8" height="26" fill="url(#pho)" rx="3"/>
<path d="M515 1063l9-11l9 9l3-3l4.8 5v2a3 3 0 0 1 -3 3h-19.8a3 3 0 0 1 -3-3z" stroke="none" fill="#3CC8F5" stroke-width="1"/>
<path d="M517 1068l8-10l10 10z" stroke="none" fill="#1C9BE8" stroke-width="1"/>
<circle cx="534.5" cy="1046.5" r="2.2" fill="#FFF"/>
<circle cx="590" cy="1055" r="14.2" fill="#ED6C47"/>
<path d="M590 1055V1040.8A14.2 14.2 0 0 1 604.2 1055z" stroke="none" fill="#FF8F6B" stroke-width="1"/>
<path d="M590 1055H604.2A14.2 14.2 0 0 1 590 1069.2z" stroke="none" fill="#D35230" stroke-width="1"/>
<rect x="574.7" y="1047" width="15" height="15" fill="#C43E1C" rx="1.5"/>
<text x="582.2" y="1058.5" font-size="11" fill="#FFF" font-weight="700" text-anchor="middle">P</text>
<rect x="1914" y="1030" width="1" height="50" fill="#BDBDBD"/>
<path d="M1639.5 1059l8.5-8.5l8.5 8.5" stroke="#222" fill="none" stroke-width="1.4"/>
<path d="M1671 1063a17 17 0 0 1 16-15 M1674 1063a13 13 0 0 1 13-12 M1677.5 1063a9 9 0 0 1 9.5-8.5 M1681 1063a5 5 0 0 1 6-5" stroke="#222" fill="none" stroke-width="1.3"/>
<path d="M1701 1050.5h15v10h-15z M1716 1053.5h1.5v4h-1.5" stroke="#222" fill="none" stroke-width="1.3"/>
<rect x="1702.5" y="1052" width="5" height="7" fill="#222"/>
<path d="M1699 1047l2 3" stroke="#222" fill="none" stroke-width="1"/>
<text x="1732.5" y="1061" font-size="13.3" fill="#111" textLength="25" lengthAdjust="spacing">РУС</text>
<text x="1796" y="1050" font-size="14.3" fill="#111" textLength="27.5" lengthAdjust="spacing">0:13</text>
<text x="1776" y="1072.5" font-size="14.2" fill="#111" textLength="69" lengthAdjust="spacing">16.11.2025</text>
<path d="M1869 1045h20v17h-10l-6 5v-5h-4z" stroke="none" fill="#111" stroke-width="1"/>
<path d="M1872 1049.5h14 M1872 1053h14 M1872 1056.5h10" stroke="#DDD" fill="none" stroke-width="1.1"/>
<circle cx="1888.3" cy="1064.1" r="10" fill="#D9D9D9" fill-opacity="0.85" stroke="#555" stroke-width="1"/>
<text x="1888.3" y="1069.5" font-size="13" fill="#111" text-anchor="middle">2</text>
<rect x="0" y="200" width="1920" height="6" fill="url(#rsh)"/>
</svg>
</body></html>
